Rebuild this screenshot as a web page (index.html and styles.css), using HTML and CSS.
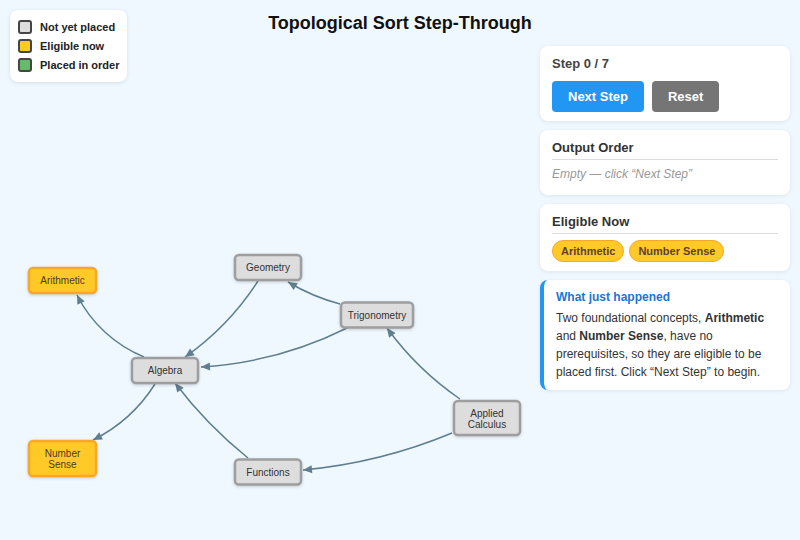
FILE: index.html
```html
<!DOCTYPE html>
<html lang="en">
<head>
    <meta charset="UTF-8">
    <meta name="viewport" content="width=device-width, initial-scale=1.0">
    <title>Topological Sort Step-Through</title>
    <link rel="stylesheet" href="styles.css">
</head>
<body>
    <div class="legend">
        <div class="legend-row"><span class="swatch pending"></span>Not yet placed</div>
        <div class="legend-row"><span class="swatch eligible"></span>Eligible now</div>
        <div class="legend-row"><span class="swatch placed"></span>Placed in order</div>
    </div>

    <h1>Topological Sort Step-Through</h1>

    <div class="main">
        <svg class="graph" width="530" height="494" viewBox="0 46 530 494">
            <defs>
                <marker id="arrow" viewBox="0 -5 10 10" refX="10" refY="0" markerWidth="11" markerHeight="9" markerUnits="userSpaceOnUse" orient="auto">
                    <path d="M0,-4.5L10,0L0,4.5Z" fill="#5f7f8e"></path>
                </marker>
            </defs>

            <!-- prerequisite edges: arrow points at the prerequisite -->
            <g class="edges">
                <path d="M144,357 A130,130 0 0 1 77,295"></path>
                <path d="M155,384 A155,155 0 0 1 93,440"></path>
                <path d="M258,281 A276,276 0 0 1 185,357"></path>
                <path d="M347,328 A378,378 0 0 1 201,367"></path>
                <path d="M340,304 A200,200 0 0 1 288,282"></path>
                <path d="M460,399 A300,300 0 0 1 387,328"></path>
                <path d="M452,433 A508,508 0 0 1 303,470"></path>
                <path d="M248,458 A430,430 0 0 1 175,383"></path>
            </g>

            <g class="nodes">
                <g class="node eligible">
                    <rect x="29" y="268" width="67" height="25" rx="4"></rect>
                    <text x="62.5" y="280.5">Arithmetic</text>
                </g>
                <g class="node eligible">
                    <rect x="29" y="441" width="67" height="35" rx="4"></rect>
                    <text x="62.5" y="458.5"><tspan x="62.5" dy="-5.5">Number</tspan><tspan x="62.5" dy="11">Sense</tspan></text>
                </g>
                <g class="node">
                    <rect x="132" y="358" width="66" height="25" rx="4"></rect>
                    <text x="165" y="370.5">Algebra</text>
                </g>
                <g class="node">
                    <rect x="235" y="255" width="66" height="25" rx="4"></rect>
                    <text x="268" y="267.5">Geometry</text>
                </g>
                <g class="node">
                    <rect x="341" y="302.5" width="72" height="25" rx="4"></rect>
                    <text x="377" y="315">Trigonometry</text>
                </g>
                <g class="node">
                    <rect x="454" y="401" width="66" height="34" rx="4"></rect>
                    <text x="487" y="418"><tspan x="487" dy="-5.5">Applied</tspan><tspan x="487" dy="11">Calculus</tspan></text>
                </g>
                <g class="node">
                    <rect x="235" y="459.5" width="66" height="25" rx="4"></rect>
                    <text x="268" y="472">Functions</text>
                </g>
            </g>
        </svg>

        <div class="sidebar">
            <div class="card">
                <div class="step-count">Step 0 / 7</div>
                <div class="controls">
                    <button class="btn btn-next">Next Step</button>
                    <button class="btn btn-reset">Reset</button>
                </div>
            </div>

            <div class="card">
                <h3>Output Order</h3>
                <p class="empty">Empty — click “Next Step”</p>
            </div>

            <div class="card">
                <h3>Eligible Now</h3>
                <div class="chips">
                    <span class="chip">Arithmetic</span>
                    <span class="chip">Number Sense</span>
                </div>
            </div>

            <div class="card explain">
                <h4>What just happened</h4>
                <p>Two foundational concepts, <b>Arithmetic</b> and <b>Number Sense</b>, have no prerequisites, so they are eligible to be placed first. Click “Next Step” to begin.</p>
            </div>
        </div>
    </div>
</body>
</html>
```

FILE: styles.css
```css
* {
    margin: 0;
    padding: 0;
    box-sizing: border-box;
}

body {
    position: relative;
    font-family: "Liberation Sans", Arial, sans-serif;
    background: #f0f8ff;
    color: #333;
    width: 800px;
    height: 540px;
    overflow: hidden;
}

h1 {
    text-align: center;
    font-size: 18px;
    line-height: 22px;
    font-weight: 700;
    color: #111;
    padding-top: 12px;
}

/* legend overlay */
.legend {
    position: absolute;
    top: 10px;
    left: 10px;
    background: #fff;
    border-radius: 8px;
    padding: 10px 8px;
    box-shadow: 0 1px 4px rgba(0, 0, 0, 0.1);
    display: flex;
    flex-direction: column;
    gap: 5px;
}

.legend-row {
    display: flex;
    align-items: center;
    gap: 8px;
    font-size: 11px;
    font-weight: 700;
    color: #222;
    height: 14px;
    white-space: nowrap;
}

.swatch {
    width: 14px;
    height: 14px;
    border: 2px solid #444;
    border-radius: 3px;
    flex-shrink: 0;
}

.swatch.pending { background: #ddd; }
.swatch.eligible { background: #ffca28; }
.swatch.placed { background: #66bb6a; }

.main {
    display: flex;
    gap: 10px;
    margin-top: 12px;
}

/* graph */
.graph {
    display: block;
    flex-shrink: 0;
}

.edges path {
    fill: none;
    stroke: #5f7f8e;
    stroke-width: 1.5;
    marker-end: url(#arrow);
}

.node rect {
    fill: #ddd;
    stroke: #9e9e9e;
    stroke-width: 2.5;
    filter: drop-shadow(0 1px 1.5px rgba(0, 0, 0, 0.18));
}

.node.eligible rect {
    fill: #ffca28;
    stroke: #f9a825;
}

.node text {
    font-family: "Liberation Sans", Arial, sans-serif;
    font-size: 10px;
    fill: #333;
    text-anchor: middle;
    dominant-baseline: central;
}

.node.eligible text {
    fill: #4e3b22;
}

/* sidebar */
.sidebar {
    width: 250px;
    display: flex;
    flex-direction: column;
    gap: 9px;
}

.card {
    background: #fff;
    border-radius: 8px;
    padding: 10px 12px 9px;
    box-shadow: 0 1px 4px rgba(0, 0, 0, 0.08);
}

.step-count {
    font-size: 13px;
    line-height: 16px;
    font-weight: 700;
    color: #444;
    margin-bottom: 9px;
}

.controls {
    display: flex;
    gap: 8px;
}

.btn {
    font-family: "Liberation Sans", Arial, sans-serif;
    font-size: 13px;
    line-height: 15px;
    font-weight: 700;
    color: #fff;
    border: none;
    border-radius: 4px;
    padding: 8px 16px;
    cursor: pointer;
}

.btn-next { background: #2196f3; }
.btn-reset { background: #757575; }

.card h3 {
    font-size: 13px;
    line-height: 16px;
    font-weight: 700;
    color: #333;
    padding-bottom: 3px;
    border-bottom: 1px solid #ddd;
    margin-bottom: 6px;
}

.empty {
    font-size: 12px;
    line-height: 17px;
    font-style: italic;
    color: #999;
    padding-bottom: 3px;
}

.chips {
    display: flex;
    gap: 5px;
}

.chip {
    font-size: 11px;
    line-height: 14px;
    font-weight: 700;
    color: #5d4037;
    background: #ffca28;
    border: 1px solid #f9a825;
    border-radius: 11px;
    padding: 3px 8px;
}

.explain {
    border-left: 4px solid #2196f3;
    padding: 9px 12px 9px 12px;
}

.explain h4 {
    font-size: 12px;
    line-height: 16px;
    font-weight: 700;
    color: #1976d2;
    margin-bottom: 4px;
}

.explain p {
    font-size: 12px;
    line-height: 18px;
    color: #333;
}
```
